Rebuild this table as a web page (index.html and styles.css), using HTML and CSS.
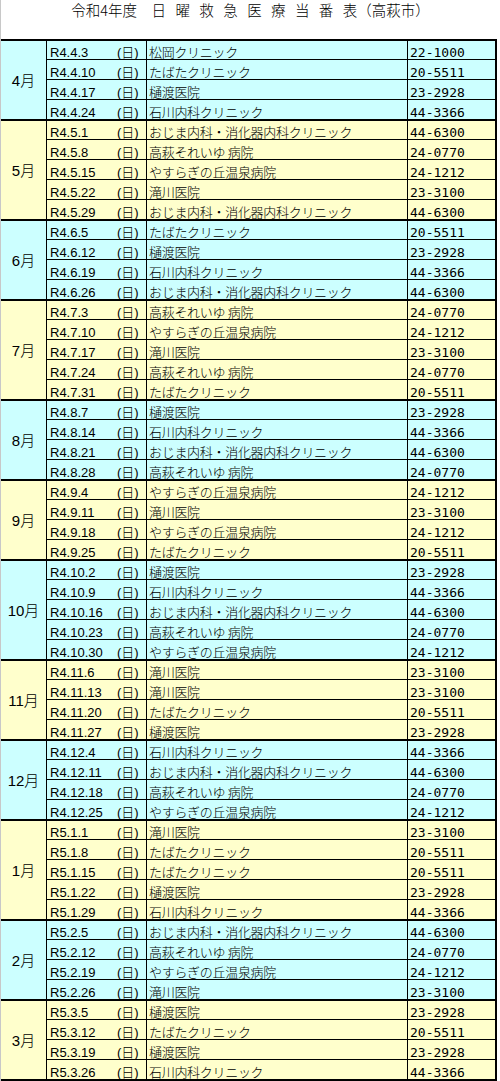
FILE: index.html
```html
<!DOCTYPE html>
<html lang="ja">
<head>
<meta charset="utf-8">
<title>令和4年度 日曜救急医療当番表（高萩市）</title>
<link rel="stylesheet" href="styles.css">
</head>
<body>
<div class="page">
  <h1 class="title">令和4年度　<span class="spaced">日曜救急医療当番</span>表（高萩市）</h1>
  <div class="sheet">
    <section class="month blue">
      <div class="mcell">4月</div>
      <div class="rows">
        <div class="row"><div class="dcell"><span class="date">R4.4.3</span><span class="dow">(日)</span></div><div class="name">松岡クリニック</div><div class="tel">22-1000</div></div>
        <div class="row"><div class="dcell"><span class="date">R4.4.10</span><span class="dow">(日)</span></div><div class="name">たばたクリニック</div><div class="tel">20-5511</div></div>
        <div class="row"><div class="dcell"><span class="date">R4.4.17</span><span class="dow">(日)</span></div><div class="name">樋渡医院</div><div class="tel">23-2928</div></div>
        <div class="row"><div class="dcell"><span class="date">R4.4.24</span><span class="dow">(日)</span></div><div class="name">石川内科クリニック</div><div class="tel">44-3366</div></div>
      </div>
    </section>
    <section class="month yellow">
      <div class="mcell">5月</div>
      <div class="rows">
        <div class="row"><div class="dcell"><span class="date">R4.5.1</span><span class="dow">(日)</span></div><div class="name">おじま内科・消化器内科クリニック</div><div class="tel">44-6300</div></div>
        <div class="row"><div class="dcell"><span class="date">R4.5.8</span><span class="dow">(日)</span></div><div class="name">高萩それいゆ 病院</div><div class="tel">24-0770</div></div>
        <div class="row"><div class="dcell"><span class="date">R4.5.15</span><span class="dow">(日)</span></div><div class="name">やすらぎの丘温泉病院</div><div class="tel">24-1212</div></div>
        <div class="row"><div class="dcell"><span class="date">R4.5.22</span><span class="dow">(日)</span></div><div class="name">滝川医院</div><div class="tel">23-3100</div></div>
        <div class="row"><div class="dcell"><span class="date">R4.5.29</span><span class="dow">(日)</span></div><div class="name">おじま内科・消化器内科クリニック</div><div class="tel">44-6300</div></div>
      </div>
    </section>
    <section class="month blue">
      <div class="mcell">6月</div>
      <div class="rows">
        <div class="row"><div class="dcell"><span class="date">R4.6.5</span><span class="dow">(日)</span></div><div class="name">たばたクリニック</div><div class="tel">20-5511</div></div>
        <div class="row"><div class="dcell"><span class="date">R4.6.12</span><span class="dow">(日)</span></div><div class="name">樋渡医院</div><div class="tel">23-2928</div></div>
        <div class="row"><div class="dcell"><span class="date">R4.6.19</span><span class="dow">(日)</span></div><div class="name">石川内科クリニック</div><div class="tel">44-3366</div></div>
        <div class="row"><div class="dcell"><span class="date">R4.6.26</span><span class="dow">(日)</span></div><div class="name">おじま内科・消化器内科クリニック</div><div class="tel">44-6300</div></div>
      </div>
    </section>
    <section class="month yellow">
      <div class="mcell">7月</div>
      <div class="rows">
        <div class="row"><div class="dcell"><span class="date">R4.7.3</span><span class="dow">(日)</span></div><div class="name">高萩それいゆ 病院</div><div class="tel">24-0770</div></div>
        <div class="row"><div class="dcell"><span class="date">R4.7.10</span><span class="dow">(日)</span></div><div class="name">やすらぎの丘温泉病院</div><div class="tel">24-1212</div></div>
        <div class="row"><div class="dcell"><span class="date">R4.7.17</span><span class="dow">(日)</span></div><div class="name">滝川医院</div><div class="tel">23-3100</div></div>
        <div class="row"><div class="dcell"><span class="date">R4.7.24</span><span class="dow">(日)</span></div><div class="name">高萩それいゆ 病院</div><div class="tel">24-0770</div></div>
        <div class="row"><div class="dcell"><span class="date">R4.7.31</span><span class="dow">(日)</span></div><div class="name">たばたクリニック</div><div class="tel">20-5511</div></div>
      </div>
    </section>
    <section class="month blue">
      <div class="mcell">8月</div>
      <div class="rows">
        <div class="row"><div class="dcell"><span class="date">R4.8.7</span><span class="dow">(日)</span></div><div class="name">樋渡医院</div><div class="tel">23-2928</div></div>
        <div class="row"><div class="dcell"><span class="date">R4.8.14</span><span class="dow">(日)</span></div><div class="name">石川内科クリニック</div><div class="tel">44-3366</div></div>
        <div class="row"><div class="dcell"><span class="date">R4.8.21</span><span class="dow">(日)</span></div><div class="name">おじま内科・消化器内科クリニック</div><div class="tel">44-6300</div></div>
        <div class="row"><div class="dcell"><span class="date">R4.8.28</span><span class="dow">(日)</span></div><div class="name">高萩それいゆ 病院</div><div class="tel">24-0770</div></div>
      </div>
    </section>
    <section class="month yellow">
      <div class="mcell">9月</div>
      <div class="rows">
        <div class="row"><div class="dcell"><span class="date">R4.9.4</span><span class="dow">(日)</span></div><div class="name">やすらぎの丘温泉病院</div><div class="tel">24-1212</div></div>
        <div class="row"><div class="dcell"><span class="date">R4.9.11</span><span class="dow">(日)</span></div><div class="name">滝川医院</div><div class="tel">23-3100</div></div>
        <div class="row"><div class="dcell"><span class="date">R4.9.18</span><span class="dow">(日)</span></div><div class="name">やすらぎの丘温泉病院</div><div class="tel">24-1212</div></div>
        <div class="row"><div class="dcell"><span class="date">R4.9.25</span><span class="dow">(日)</span></div><div class="name">たばたクリニック</div><div class="tel">20-5511</div></div>
      </div>
    </section>
    <section class="month blue">
      <div class="mcell">10月</div>
      <div class="rows">
        <div class="row"><div class="dcell"><span class="date">R4.10.2</span><span class="dow">(日)</span></div><div class="name">樋渡医院</div><div class="tel">23-2928</div></div>
        <div class="row"><div class="dcell"><span class="date">R4.10.9</span><span class="dow">(日)</span></div><div class="name">石川内科クリニック</div><div class="tel">44-3366</div></div>
        <div class="row"><div class="dcell"><span class="date">R4.10.16</span><span class="dow">(日)</span></div><div class="name">おじま内科・消化器内科クリニック</div><div class="tel">44-6300</div></div>
        <div class="row"><div class="dcell"><span class="date">R4.10.23</span><span class="dow">(日)</span></div><div class="name">高萩それいゆ 病院</div><div class="tel">24-0770</div></div>
        <div class="row"><div class="dcell"><span class="date">R4.10.30</span><span class="dow">(日)</span></div><div class="name">やすらぎの丘温泉病院</div><div class="tel">24-1212</div></div>
      </div>
    </section>
    <section class="month yellow">
      <div class="mcell">11月</div>
      <div class="rows">
        <div class="row"><div class="dcell"><span class="date">R4.11.6</span><span class="dow">(日)</span></div><div class="name">滝川医院</div><div class="tel">23-3100</div></div>
        <div class="row"><div class="dcell"><span class="date">R4.11.13</span><span class="dow">(日)</span></div><div class="name">滝川医院</div><div class="tel">23-3100</div></div>
        <div class="row"><div class="dcell"><span class="date">R4.11.20</span><span class="dow">(日)</span></div><div class="name">たばたクリニック</div><div class="tel">20-5511</div></div>
        <div class="row"><div class="dcell"><span class="date">R4.11.27</span><span class="dow">(日)</span></div><div class="name">樋渡医院</div><div class="tel">23-2928</div></div>
      </div>
    </section>
    <section class="month blue">
      <div class="mcell">12月</div>
      <div class="rows">
        <div class="row"><div class="dcell"><span class="date">R4.12.4</span><span class="dow">(日)</span></div><div class="name">石川内科クリニック</div><div class="tel">44-3366</div></div>
        <div class="row"><div class="dcell"><span class="date">R4.12.11</span><span class="dow">(日)</span></div><div class="name">おじま内科・消化器内科クリニック</div><div class="tel">44-6300</div></div>
        <div class="row"><div class="dcell"><span class="date">R4.12.18</span><span class="dow">(日)</span></div><div class="name">高萩それいゆ 病院</div><div class="tel">24-0770</div></div>
        <div class="row"><div class="dcell"><span class="date">R4.12.25</span><span class="dow">(日)</span></div><div class="name">やすらぎの丘温泉病院</div><div class="tel">24-1212</div></div>
      </div>
    </section>
    <section class="month yellow">
      <div class="mcell">1月</div>
      <div class="rows">
        <div class="row"><div class="dcell"><span class="date">R5.1.1</span><span class="dow">(日)</span></div><div class="name">滝川医院</div><div class="tel">23-3100</div></div>
        <div class="row"><div class="dcell"><span class="date">R5.1.8</span><span class="dow">(日)</span></div><div class="name">たばたクリニック</div><div class="tel">20-5511</div></div>
        <div class="row"><div class="dcell"><span class="date">R5.1.15</span><span class="dow">(日)</span></div><div class="name">たばたクリニック</div><div class="tel">20-5511</div></div>
        <div class="row"><div class="dcell"><span class="date">R5.1.22</span><span class="dow">(日)</span></div><div class="name">樋渡医院</div><div class="tel">23-2928</div></div>
        <div class="row"><div class="dcell"><span class="date">R5.1.29</span><span class="dow">(日)</span></div><div class="name">石川内科クリニック</div><div class="tel">44-3366</div></div>
      </div>
    </section>
    <section class="month blue">
      <div class="mcell">2月</div>
      <div class="rows">
        <div class="row"><div class="dcell"><span class="date">R5.2.5</span><span class="dow">(日)</span></div><div class="name">おじま内科・消化器内科クリニック</div><div class="tel">44-6300</div></div>
        <div class="row"><div class="dcell"><span class="date">R5.2.12</span><span class="dow">(日)</span></div><div class="name">高萩それいゆ 病院</div><div class="tel">24-0770</div></div>
        <div class="row"><div class="dcell"><span class="date">R5.2.19</span><span class="dow">(日)</span></div><div class="name">やすらぎの丘温泉病院</div><div class="tel">24-1212</div></div>
        <div class="row"><div class="dcell"><span class="date">R5.2.26</span><span class="dow">(日)</span></div><div class="name">滝川医院</div><div class="tel">23-3100</div></div>
      </div>
    </section>
    <section class="month yellow">
      <div class="mcell">3月</div>
      <div class="rows">
        <div class="row"><div class="dcell"><span class="date">R5.3.5</span><span class="dow">(日)</span></div><div class="name">樋渡医院</div><div class="tel">23-2928</div></div>
        <div class="row"><div class="dcell"><span class="date">R5.3.12</span><span class="dow">(日)</span></div><div class="name">たばたクリニック</div><div class="tel">20-5511</div></div>
        <div class="row"><div class="dcell"><span class="date">R5.3.19</span><span class="dow">(日)</span></div><div class="name">樋渡医院</div><div class="tel">23-2928</div></div>
        <div class="row"><div class="dcell"><span class="date">R5.3.26</span><span class="dow">(日)</span></div><div class="name">石川内科クリニック</div><div class="tel">44-3366</div></div>
      </div>
    </section>
  </div>
</div>
</body>
</html>
```
FILE: styles.css
```css
* { box-sizing: border-box; }

html, body {
  margin: 0;
  padding: 0;
  background: #ffffff;
  color: #000000;
}

.page {
  width: 500px;
  min-height: 1081px;
  border-left: 1px solid #c8c8c8;
}

.title {
  margin: 0;
  height: 39px;
  padding-top: 0;
  font-family: "Noto Sans CJK JP", sans-serif;
  font-weight: 300;
  font-size: 14.5px;
  line-height: 20px;
  text-align: center;
  white-space: nowrap;
}

.spaced {
  letter-spacing: 9.4px;
}

.sheet {
  width: 496px;
  border-right: 2px solid #000;
  border-bottom: 2px solid #000;
}

.month {
  display: flex;
  border-top: 2px solid #000;
}

.blue { background: #ccffff; }
.yellow { background: #ffffcc; }

.mcell {
  width: 46px;
  flex: none;
  border-right: 1px solid #000;
  display: flex;
  align-items: center;
  justify-content: center;
  font-family: "Liberation Sans", "Noto Sans CJK JP", sans-serif;
  font-weight: 300;
  font-size: 15px;
  line-height: 15px;
}

.rows {
  flex: 1;
}

.row {
  display: flex;
  height: 20px;
  border-top: 1px solid #000;
}

.row:first-child {
  height: 18px;
  border-top: 0;
}

.dcell {
  width: 100px;
  flex: none;
  border-right: 1px solid #000;
  padding-left: 3px;
  display: flex;
  align-items: flex-end;
  font-family: "Liberation Sans", "Noto Sans CJK JP", sans-serif;
  font-weight: 300;
  font-size: 13px;
  line-height: 13px;
  white-space: nowrap;
}

.date {
  width: 67px;
  flex: none;
}

.dow {
  flex: none;
}

.name {
  width: 261px;
  flex: none;
  border-right: 1px solid #000;
  padding-left: 2px;
  padding-bottom: 1px;
  display: flex;
  align-items: flex-end;
  font-family: "Noto Sans CJK JP", sans-serif;
  font-weight: 300;
  font-size: 13px;
  line-height: 13px;
  letter-spacing: -0.3px;
  white-space: nowrap;
}

.tel {
  width: 87px;
  flex: none;
  padding-left: 2px;
  display: flex;
  align-items: flex-end;
  font-family: "DejaVu Sans Mono", monospace;
  font-size: 13px;
  line-height: 13px;
  white-space: nowrap;
}
```
